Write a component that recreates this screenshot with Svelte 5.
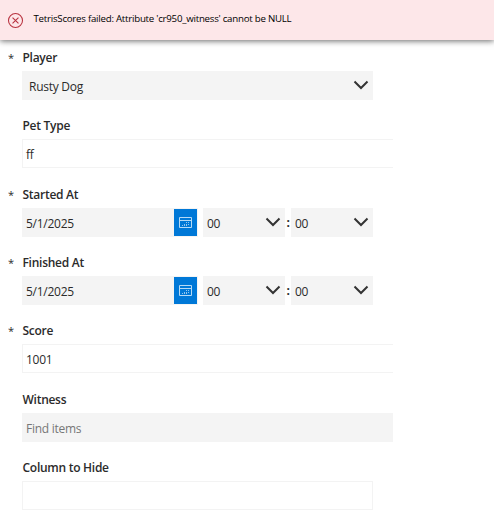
<script>
  const fields = [
    { label: 'Player', required: true, kind: 'select', value: 'Rusty Dog', gap: 9 },
    { label: 'Pet Type', kind: 'text', value: 'ff', gap: 17 },
    { label: 'Started At', required: true, kind: 'date', value: '5/1/2025', gap: 18 },
    { label: 'Finished At', required: true, kind: 'date', value: '5/1/2025', gap: 17 },
    { label: 'Score', required: true, kind: 'text', value: '1001', gap: 17 },
    { label: 'Witness', kind: 'lookup', value: 'Find items', gap: 18 },
    { label: 'Column to Hide', kind: 'empty', value: '', gap: 17 }
  ];
</script>

{#snippet chevron()}
  <svg class="chevron" width="16" height="10" viewBox="0 0 16 10"><path d="M1.5 1.5 8 8 14.5 1.5" fill="none" stroke="#333" stroke-width="2" /></svg>
{/snippet}

<div class="screen">
  <div class="banner">
    <svg width="16" height="16" viewBox="0 0 16 16" fill="none" stroke="#b8323f">
      <circle cx="8" cy="8" r="6.6" />
      <path d="M5.2 5.2 10.8 10.8M10.8 5.2 5.2 10.8" />
    </svg>
    <span>TetrisScores failed: Attribute 'cr950_witness' cannot be NULL</span>
  </div>
  <div class="form">
    {#each fields as f}
      <div class="field" style="margin-top: {f.gap}px">
        <div class="label">
          <span class="star">{f.required ? '*' : ''}</span><span class="name">{f.label}</span>
        </div>
        {#if f.kind === 'date'}
          <div class="row">
            <div class="box date">
              <span>{f.value}</span>
              <div class="cal">
                <svg width="13" height="13" viewBox="0 0 13 13" fill="none" stroke="#b5daf6">
                  <path d="M.5 1.5h12v10H.5zM.5 4.5h12" />
                  <path d="M7 6.5h1M9 6.5h1M5 8.5h1M7 8.5h1M9 8.5h1M3 9.5h1M5 9.5h1M7 9.5h1" stroke-opacity=".8" />
                </svg>
              </div>
            </div>
            <div class="box time"><span>00</span>{@render chevron()}</div>
            <span class="colon">:</span>
            <div class="box time"><span>00</span>{@render chevron()}</div>
          </div>
        {:else}
          <div class="box {f.kind}">
            <span>{f.value}</span>
            {#if f.kind === 'select'}{@render chevron()}{/if}
          </div>
        {/if}
      </div>
    {/each}
  </div>
</div>

<style>
  .screen {
    width: 494px;
    height: 511px;
    overflow: hidden;
    background: #fff;
    color: #2b2b2b;
    font: 12px/16px "Open Sans", "Noto Sans", sans-serif;
    letter-spacing: -0.27px;
  }
  .banner {
    height: 40px;
    box-sizing: border-box;
    display: flex;
    align-items: center;
    gap: 9.5px;
    padding-left: 7px;
    background: #fde7e9;
    color: #000;
    font-size: 9.7px;
    letter-spacing: -0.24px;
    white-space: nowrap;
    box-shadow: 0 1px 6px rgba(0, 0, 0, 0.6);
  }
  .banner svg { flex: none; width: 17px; height: 17px; }
  .banner span { padding-bottom: 3px; }
  .form { display: flow-root; }
  .label { display: flex; box-sizing: border-box; height: 22px; padding-top: 1px; }
  .field { height: 51px; }
  .star { width: 14.5px; padding-left: 8px; font-size: 11px; }
  .name { font-weight: 600; }
  .box {
    box-sizing: border-box;
    display: flex;
    align-items: center;
    justify-content: space-between;
    width: 351px;
    height: 29px;
    margin-left: 22px;
    padding: 0 4px;
    background: #f4f4f4;
  }
  .box > span { padding-top: 2px; }
  .select { padding-left: 7px; }
  .text, .empty { background: #fff; border: 1px solid #f3f3f3; }
  .text { width: 371px; border-right: 0; padding-left: 3px; }
  .lookup { width: 371px; color: #777; }
  .row { display: flex; align-items: center; }
  .date { width: 176px; padding-right: 1px; }
  .cal {
    width: 23px;
    height: 27px;
    display: flex;
    align-items: center;
    justify-content: center;
    background: #0078d7;
  }
  .time { width: 82px; margin-left: 5px; }
  .colon { width: 6px; text-align: center; font-weight: 700; }
  .colon + .time { margin-left: 0; }
  .chevron { margin-bottom: 2px; }
</style>
